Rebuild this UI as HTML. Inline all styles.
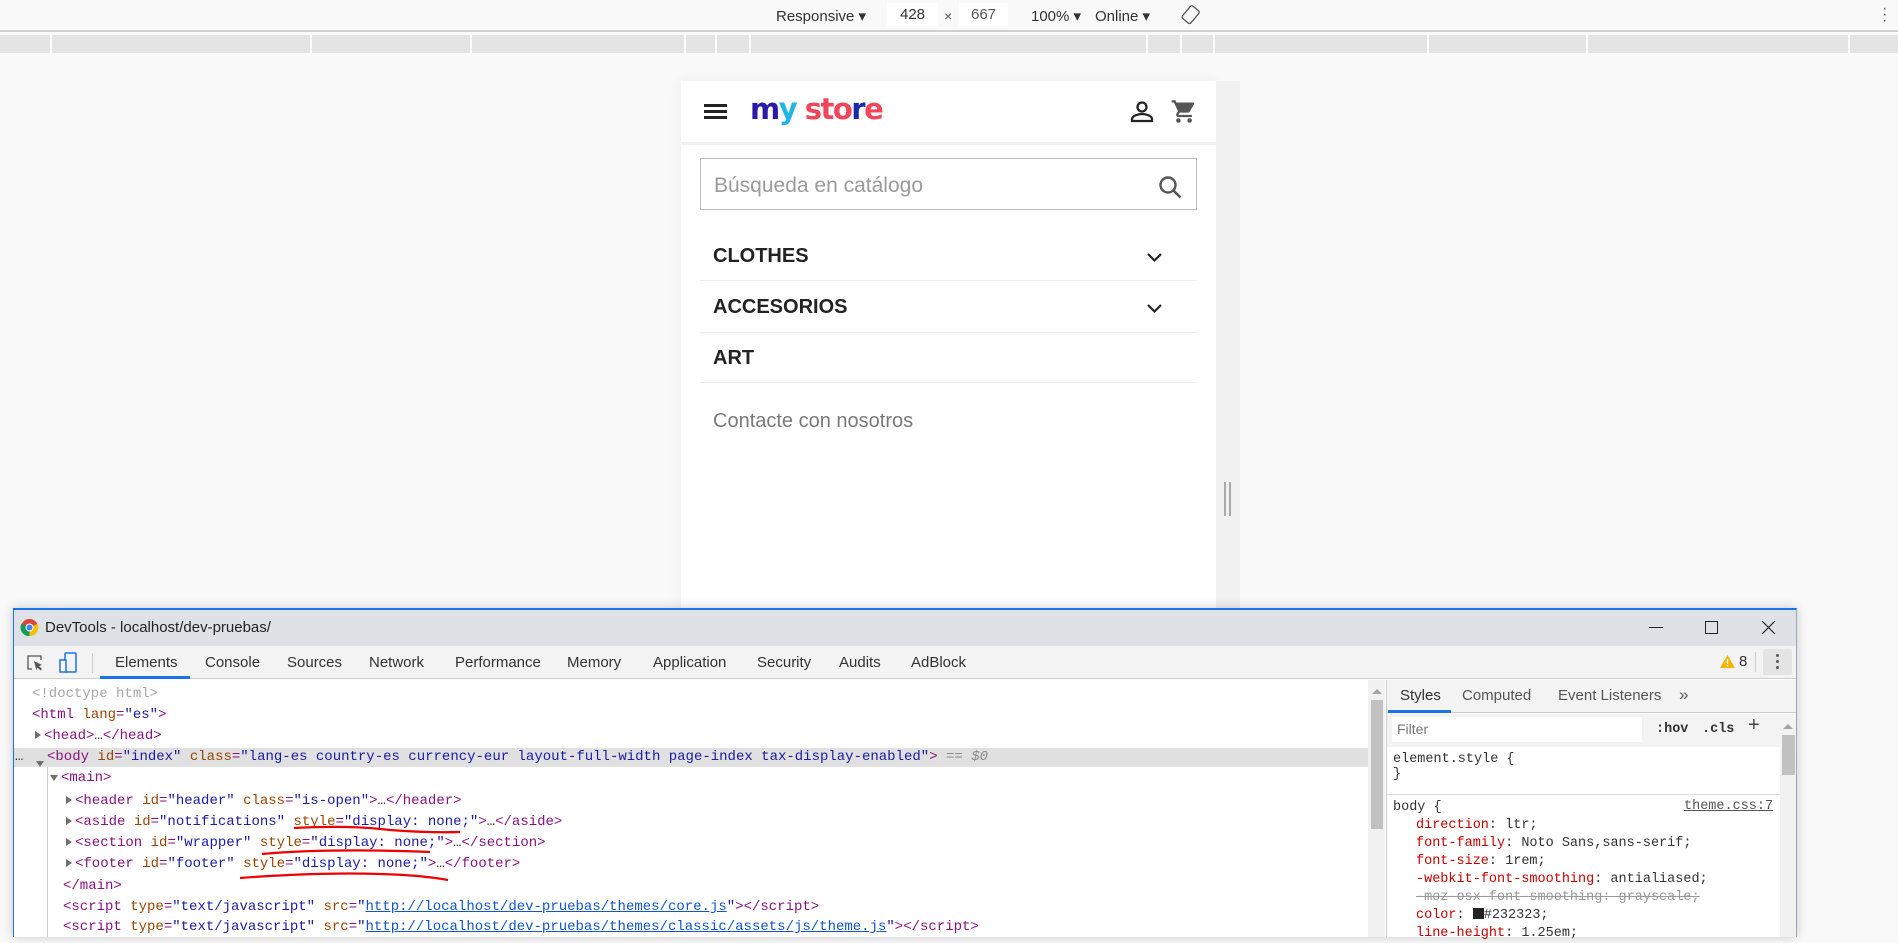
<!DOCTYPE html>
<html><head><meta charset="utf-8">
<style>
*{box-sizing:border-box;margin:0;padding:0}
body{width:1898px;height:937px;overflow:hidden;background:#f9f9f9;font-family:"Liberation Sans",sans-serif;position:relative}
.a{position:absolute;white-space:nowrap}
.mono{font-family:"Liberation Mono",monospace;font-size:14px}
.t{color:#881280}.n{color:#994500}.v{color:#1a1aa6}.g{color:#a0a0a0}
.tri{display:inline-block;width:0;height:0;border-left:6px solid #6e6e6e;border-top:4px solid transparent;border-bottom:4px solid transparent;margin-right:3px}
.trid{display:inline-block;width:0;height:0;border-top:6px solid #6e6e6e;border-left:4px solid transparent;border-right:4px solid transparent;margin-right:3px}
.menu{font-weight:bold;font-size:20px;color:#232323;left:713px}
.hr{position:absolute;left:700px;width:497px;height:1px;background:#efefef}
.tab{font-size:15px;color:#333;top:654px}
</style></head><body>
<div class="a" style="left:0;top:0;width:1898px;height:32px;background:#f9f9f9;border-bottom:2px solid #cfcfcf"></div>
<div class="a" style="left:776px;top:7px;font-size:15px;color:#333">Responsive ▾</div>
<div class="a" style="left:887px;top:3px;width:51px;height:23px;background:#fff;font-size:15px;color:#333;text-align:center;line-height:23px">428</div>
<div class="a" style="left:944px;top:8px;font-size:14px;color:#555">×</div>
<div class="a" style="left:959px;top:3px;width:49px;height:23px;background:#fff;font-size:15px;color:#555;text-align:center;line-height:23px">667</div>
<div class="a" style="left:1031px;top:7px;font-size:15px;color:#333">100% ▾</div>
<div class="a" style="left:1095px;top:7px;font-size:15px;color:#333">Online ▾</div>
<svg class="a" style="left:1181px;top:4px" width="20" height="22" viewBox="0 0 20 22"><rect x="4" y="3" width="11" height="16" rx="2" transform="rotate(40 10 11)" fill="none" stroke="#555" stroke-width="1.3"/></svg>
<div class="a" style="left:1882px;top:6px;color:#555;font-size:16px;line-height:6px">·<br>·<br>·</div>
<div class="a" style="left:0;top:35px;width:1898px;height:18px;background:#e4e4e4"></div>
<div class="a" style="left:50px;top:35px;width:2px;height:18px;background:#fff"></div>
<div class="a" style="left:310px;top:35px;width:2px;height:18px;background:#fff"></div>
<div class="a" style="left:470px;top:35px;width:2px;height:18px;background:#fff"></div>
<div class="a" style="left:684px;top:35px;width:2px;height:18px;background:#fff"></div>
<div class="a" style="left:715px;top:35px;width:2px;height:18px;background:#fff"></div>
<div class="a" style="left:749px;top:35px;width:2px;height:18px;background:#fff"></div>
<div class="a" style="left:1146px;top:35px;width:2px;height:18px;background:#fff"></div>
<div class="a" style="left:1180px;top:35px;width:2px;height:18px;background:#fff"></div>
<div class="a" style="left:1213px;top:35px;width:2px;height:18px;background:#fff"></div>
<div class="a" style="left:1427px;top:35px;width:2px;height:18px;background:#fff"></div>
<div class="a" style="left:1586px;top:35px;width:2px;height:18px;background:#fff"></div>
<div class="a" style="left:1848px;top:35px;width:2px;height:18px;background:#fff"></div>
<div class="a" style="left:681px;top:81px;width:535px;height:540px;background:#fff;box-shadow:0 0 12px rgba(0,0,0,.06)"></div>
<div class="a" style="left:1216px;top:81px;width:24px;height:540px;background:#f1f1f1"></div>
<div class="a" style="left:1224px;top:482px;width:2px;height:34px;background:#aaa"></div>
<div class="a" style="left:1229px;top:482px;width:2px;height:34px;background:#aaa"></div>
<div class="a" style="left:704px;top:104px;width:23px;height:3px;background:#232323"></div>
<div class="a" style="left:704px;top:110px;width:23px;height:3px;background:#232323"></div>
<div class="a" style="left:704px;top:116px;width:23px;height:3px;background:#232323"></div>
<div class="a" style="left:750px;top:92px;font-size:29px;font-weight:bold;letter-spacing:-1.5px;font-family:'DejaVu Sans',sans-serif"><span style="color:#2a1aa8">m</span><span style="color:#1fb6e6">y</span> <span style="color:#f2455a">sto</span><span style="color:#1a2ab0">r</span><span style="color:#f2455a">e</span></div>
<svg class="a" style="left:1129px;top:100px" width="26" height="24" viewBox="0 0 26 24"><circle cx="13" cy="7" r="4.5" fill="none" stroke="#232323" stroke-width="2.3"/><path d="M3 21v-2c0-3 6-5 10-5s10 2 10 5v2z" fill="none" stroke="#232323" stroke-width="2.3"/></svg>
<svg class="a" style="left:1170px;top:98px" width="28" height="27" viewBox="0 0 24 24"><path d="M7 18c-1.1 0-2 .9-2 2s.9 2 2 2 2-.9 2-2-.9-2-2-2zM1 2v2h2l3.6 7.6-1.4 2.4c-.1.3-.2.6-.2 1 0 1.1.9 2 2 2h12v-2H7.4c-.1 0-.2-.1-.2-.2v-.1l.9-1.7h7.4c.8 0 1.4-.4 1.700-1l3.6-6.5c.1-.2.2-.3.2-.5 0-.6-.5-1-1-1H5.2l-.9-2H1zm16 16c-1.1 0-2 .9-2 2s.9 2 2 2 2-.9 2-2-.9-2-2-2z" fill="#555"/></svg>
<div class="a" style="left:681px;top:142px;width:535px;height:3px;background:#f1f1f1"></div>
<div class="a" style="left:700px;top:158px;width:497px;height:52px;border:1px solid #bbb"></div>
<div class="a" style="left:714px;top:174px;font-size:21px;color:#9b9b9b">Búsqueda en catálogo</div>
<svg class="a" style="left:1158px;top:175px" width="26" height="26" viewBox="0 0 26 26"><circle cx="10" cy="10" r="7.5" fill="none" stroke="#555" stroke-width="2.4"/><path d="M15.5 15.5l7 7" stroke="#555" stroke-width="2.6"/></svg>
<div class="a menu" style="top:245px">CLOTHES</div>
<svg class="a" style="left:1146px;top:252px" width="17" height="11" viewBox="0 0 17 11"><path d="M2 2l6.5 6.5L15 2" fill="none" stroke="#232323" stroke-width="2.2"/></svg>
<div class="hr" style="top:280px"></div>
<div class="a menu" style="top:296px">ACCESORIOS</div>
<svg class="a" style="left:1146px;top:303px" width="17" height="11" viewBox="0 0 17 11"><path d="M2 2l6.5 6.5L15 2" fill="none" stroke="#232323" stroke-width="2.2"/></svg>
<div class="hr" style="top:332px"></div>
<div class="a menu" style="top:347px">ART</div>
<div class="hr" style="top:382px"></div>
<div class="a" style="left:713px;top:410px;font-size:20px;color:#7a7a7a">Contacte con nosotros</div>
<div class="a" style="left:13px;top:608px;width:1784px;height:329px;background:#fff;border-top:2px solid #1a73e8;border-left:1px solid #1a73e8;border-right:1px solid #9ab;box-shadow:0 0 10px rgba(0,0,0,.2)"></div>
<div class="a" style="left:14px;top:610px;width:1782px;height:36px;background:#dee1e6"></div>
<svg class="a" style="left:20px;top:618px" width="19" height="19" viewBox="0 0 20 20"><circle cx="10" cy="10" r="9" fill="#db4437"/><path d="M10 10L18.5 6A9 9 0 0 1 10 19z" fill="#f4c20d"/><path d="M10 10L10 19A9 9 0 0 1 1.5 6z" fill="#0f9d58"/><circle cx="10" cy="10" r="4.2" fill="#fff"/><circle cx="10" cy="10" r="3.2" fill="#4285f4"/></svg>
<div class="a" style="left:45px;top:619px;font-size:15px;color:#222">DevTools - localhost/dev-pruebas/</div>
<div class="a" style="left:1649px;top:627px;width:14px;height:1px;background:#222"></div>
<div class="a" style="left:1705px;top:621px;width:13px;height:13px;border:1px solid #222"></div>
<svg class="a" style="left:1761px;top:620px" width="15" height="15"><path d="M1 1l13 13M14 1L1 14" stroke="#222" stroke-width="1.2"/></svg>
<div class="a" style="left:14px;top:646px;width:1782px;height:33px;background:#f3f3f3;border-bottom:1px solid #ccc"></div>
<svg class="a" style="left:26px;top:654px" width="18" height="18" viewBox="0 0 18 18"><path d="M6 15H2V2h13v4" fill="none" stroke="#555" stroke-width="1.3"/><path d="M8 7l8 4-3 1 3 3-1.5 1.5-3-3-1 3z" fill="#555"/></svg>
<svg class="a" style="left:58px;top:652px" width="20" height="22" viewBox="0 0 20 22"><rect x="7" y="1" width="11" height="19" rx="1" fill="none" stroke="#1a73e8" stroke-width="1.5"/><rect x="2" y="8" width="6" height="12" fill="#fff" stroke="#1a73e8" stroke-width="1.5"/></svg>
<div class="a" style="left:92px;top:653px;width:1px;height:20px;background:#ccc"></div>
<div class="a tab" style="left:115px">Elements</div>
<div class="a" style="left:100px;top:676px;width:90px;height:3px;background:#1a73e8"></div>
<div class="a tab" style="left:205px">Console</div>
<div class="a tab" style="left:287px">Sources</div>
<div class="a tab" style="left:369px">Network</div>
<div class="a tab" style="left:455px">Performance</div>
<div class="a tab" style="left:567px">Memory</div>
<div class="a tab" style="left:653px">Application</div>
<div class="a tab" style="left:757px">Security</div>
<div class="a tab" style="left:839px">Audits</div>
<div class="a tab" style="left:911px">AdBlock</div>
<svg class="a" style="left:1720px;top:655px" width="15" height="13"><path d="M7.5 0L15 13H0z" fill="#f4b400"/><rect x="6.8" y="4" width="1.4" height="5" fill="#fff"/><rect x="6.8" y="10" width="1.4" height="1.4" fill="#fff"/></svg>
<div class="a" style="left:1739px;top:653px;font-size:15px;color:#333">8</div>
<div class="a" style="left:1755px;top:652px;width:1px;height:20px;background:#ccc"></div>
<div class="a" style="left:1763px;top:649px;width:29px;height:26px;background:#e4e4e4;border-radius:2px"></div>
<div class="a" style="left:1776px;top:654px;width:3px;height:3px;background:#555;border-radius:2px;box-shadow:0 6px 0 #555,0 12px 0 #555"></div>
<div class="a mono" style="left:32px;top:686px;color:#a8a8a8">&lt;!doctype html&gt;</div>
<div class="a mono t" style="left:32px;top:707px">&lt;html <span class="n">lang</span>=<span class="v">"es"</span>&gt;</div>
<div class="a mono t" style="left:35px;top:728px"><span class="tri"></span>&lt;head&gt;<span style="color:#333">…</span>&lt;/head&gt;</div>
<div class="a" style="left:14px;top:748px;width:1354px;height:19px;background:#e0e0e0"></div>
<div class="a mono" style="left:15px;top:749px;color:#333">…</div>
<div class="a" style="left:36px;top:754px"><span class="trid"></span></div>
<div class="a mono t" style="left:47px;top:749px">&lt;body <span class="n">id</span>=<span class="v">"index"</span> <span class="n">class</span>=<span class="v">"lang-es country-es currency-eur layout-full-width page-index tax-display-enabled"</span>&gt; <span style="color:#888">== <i>$0</i></span></div>
<div class="a" style="left:47px;top:767px;width:1px;height:170px;background:#ccc"></div>
<div class="a mono t" style="left:50px;top:770px"><span class="trid"></span>&lt;main&gt;</div>
<div class="a mono t" style="left:66px;top:793px"><span class="tri"></span>&lt;header <span class="n">id</span>=<span class="v">"header"</span> <span class="n">class</span>=<span class="v">"is-open"</span>&gt;<span style="color:#333">…</span>&lt;/header&gt;</div>
<div class="a mono t" style="left:66px;top:814px"><span class="tri"></span>&lt;aside <span class="n">id</span>=<span class="v">"notifications"</span> <span class="n">style</span>=<span class="v">"display: none;"</span>&gt;<span style="color:#333">…</span>&lt;/aside&gt;</div>
<div class="a mono t" style="left:66px;top:835px"><span class="tri"></span>&lt;section <span class="n">id</span>=<span class="v">"wrapper"</span> <span class="n">style</span>=<span class="v">"display: none;"</span>&gt;<span style="color:#333">…</span>&lt;/section&gt;</div>
<div class="a mono t" style="left:66px;top:856px"><span class="tri"></span>&lt;footer <span class="n">id</span>=<span class="v">"footer"</span> <span class="n">style</span>=<span class="v">"display: none;"</span>&gt;<span style="color:#333">…</span>&lt;/footer&gt;</div>
<div class="a mono t" style="left:63px;top:878px">&lt;/main&gt;</div>
<div class="a mono t" style="left:63px;top:899px">&lt;script <span class="n">type</span>=<span class="v">"text/javascript"</span> <span class="n">src</span>=<span class="v">"<u style="color:#1155cc">http://localhost/dev-pruebas/themes/core.js</u>"</span>&gt;&lt;/script&gt;</div>
<div class="a mono t" style="left:63px;top:919px">&lt;script <span class="n">type</span>=<span class="v">"text/javascript"</span> <span class="n">src</span>=<span class="v">"<u style="color:#1155cc">http://localhost/dev-pruebas/themes/classic/assets/js/theme.js</u>"</span>&gt;&lt;/script&gt;</div>
<svg class="a" style="left:230px;top:824px" width="240" height="60"><path d="M64 4 Q120 1 160 6 Q200 9 230 8" fill="none" stroke="#e00" stroke-width="2.2"/><path d="M32 30 Q100 24 200 28" fill="none" stroke="#e00" stroke-width="2.2"/><path d="M10 54 Q90 48 150 50 Q190 51 218 56" fill="none" stroke="#e00" stroke-width="2.2"/></svg>
<div class="a" style="left:1368px;top:680px;width:17px;height:257px;background:#f1f1f1"></div>
<div class="a" style="left:1371px;top:700px;width:12px;height:129px;background:#c1c1c1"></div>
<div class="a" style="left:1372px;top:689px;border-left:5px solid transparent;border-right:5px solid transparent;border-bottom:5px solid #a3a3a3"></div>
<div class="a" style="left:1386px;top:680px;width:1px;height:257px;background:#ccc"></div>
<div class="a" style="left:1387px;top:680px;width:409px;height:33px;background:#f3f3f3;border-bottom:1px solid #ccc"></div>
<div class="a tab" style="left:1400px;top:687px">Styles</div>
<div class="a" style="left:1388px;top:710px;width:63px;height:3px;background:#1a73e8"></div>
<div class="a tab" style="left:1462px;top:687px;color:#555">Computed</div>
<div class="a tab" style="left:1558px;top:687px;color:#555">Event Listeners</div>
<div class="a tab" style="left:1679px;top:685px;color:#555;font-size:17px">»</div>
<div class="a" style="left:1387px;top:714px;width:409px;height:33px;background:#f3f3f3"></div>
<div class="a" style="left:1392px;top:717px;width:250px;height:25px;background:#fff"></div>
<div class="a" style="left:1397px;top:721px;font-size:14px;color:#777">Filter</div>
<div class="a mono" style="left:1656px;top:722px;font-weight:bold;color:#333;font-size:13.5px">:hov</div>
<div class="a mono" style="left:1702px;top:722px;font-weight:bold;color:#333;font-size:13.5px">.cls</div>
<div class="a" style="left:1748px;top:714px;font-size:20px;color:#444">+</div>
<div class="a mono" style="left:1393px;top:752px;color:#333;font-size:13.5px">element.style {<br>}</div>
<div class="a" style="left:1387px;top:794px;width:393px;height:1px;background:#ddd"></div>
<div class="a mono" style="left:1393px;top:799px;color:#333;line-height:18px;font-size:13.5px">body {<br>
<span style="margin-left:23px;color:#c80000">direction</span>: ltr;<br>
<span style="margin-left:23px;color:#c80000">font-family</span>: Noto Sans,sans-serif;<br>
<span style="margin-left:23px;color:#c80000">font-size</span>: 1rem;<br>
<span style="margin-left:23px;color:#c80000">-webkit-font-smoothing</span>: antialiased;<br>
<s style="margin-left:23px;color:#999">-moz-osx-font-smoothing: grayscale;</s><br>
<span style="margin-left:23px;color:#c80000">color</span>: <span style="display:inline-block;width:11px;height:11px;background:#232323;vertical-align:-1px"></span>#232323;<br>
<span style="margin-left:23px;color:#c80000">line-height</span>: 1.25em;</div>
<div class="a mono" style="left:1684px;top:799px;color:#555;text-decoration:underline;font-size:13.5px">theme.css:7</div>
<div class="a" style="left:1780px;top:747px;width:16px;height:190px;background:#f1f1f1"></div>
<div class="a" style="left:1782px;top:735px;width:13px;height:40px;background:#c1c1c1"></div>
<div class="a" style="left:1783px;top:724px;border-left:5px solid transparent;border-right:5px solid transparent;border-bottom:5px solid #a3a3a3"></div>
</body></html>
